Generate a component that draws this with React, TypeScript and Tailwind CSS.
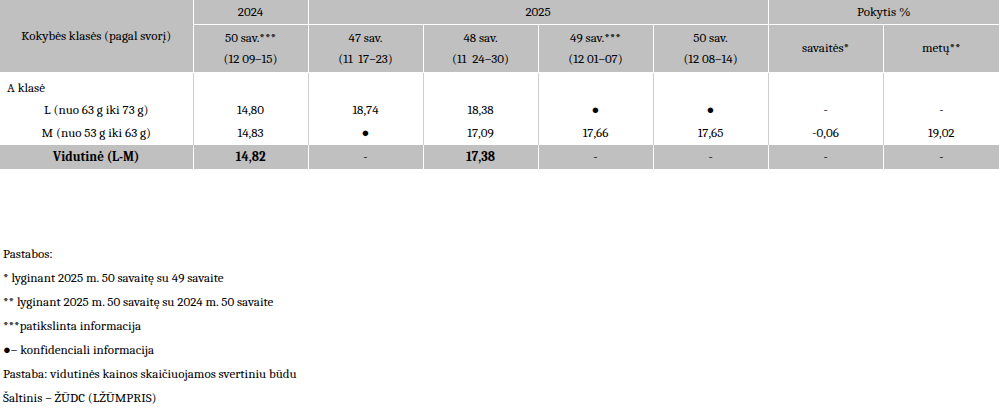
const headBase = 'bg-[#c0c0c0] border-l border-white text-center p-0';
const bodyCell = 'border-l border-[#cfcfcf] text-center p-0';

const weeks = [
  { top: '50 sav.***', bottom: '(12 09–15)' },
  { top: '47 sav.', bottom: '(11  17–23)' },
  { top: '48 sav.', bottom: '(11  24–30)' },
  { top: '49 sav.***', bottom: '(12 01–07)' },
  { top: '50 sav.', bottom: '(12 08–14)' },
];

const rows = [
  { label: 'L (nuo 63 g iki 73 g)', values: ['14,80', '18,74', '18,38', '●', '●', '-', '-'] },
  { label: 'M (nuo 53 g iki 63 g)', values: ['14,83', '●', '17,09', '17,66', '17,65', '-0,06', '19,02'] },
];

const average = ['14,82', '-', '17,38', '-', '-', '-', '-'];

const notes = [
  'Pastabos:',
  '* lyginant 2025 m. 50 savaitę su 49 savaite',
  '** lyginant 2025 m. 50 savaitę su 2024 m. 50 savaite',
  '***patikslinta informacija',
  '●– konfidenciali informacija',
  'Pastaba: vidutinės kainos skaičiuojamos svertiniu būdu',
  'Šaltinis – ŽŪDC (LŽŪMPRIS)',
];

export default function App() {
  return (
    <div className="w-[999px] h-[410px] bg-white text-black text-[13px] font-serif overflow-hidden">
      <table className="w-[999px] table-fixed border-collapse">
        <colgroup>
          <col className="w-[193px]" />
          <col className="w-[115px]" />
          <col className="w-[115px]" />
          <col className="w-[115px]" />
          <col className="w-[115px]" />
          <col className="w-[115px]" />
          <col className="w-[115px]" />
          <col className="w-[116px]" />
        </colgroup>
        <thead>
          <tr className="h-[24px]">
            <th rowSpan={2} className="bg-[#c0c0c0] text-center font-normal p-0 border-b border-white">
              Kokybės klasės (pagal svorį)
            </th>
            <th className={`${headBase} font-normal border-b`}>2024</th>
            <th colSpan={4} className={`${headBase} font-normal border-b`}>2025</th>
            <th colSpan={2} className={`${headBase} font-normal border-b`}>Pokytis %</th>
          </tr>
          <tr className="h-[48px]">
            {weeks.map((w) => (
              <th key={w.top + w.bottom} className={`${headBase} font-normal border-b leading-[21px] whitespace-pre`}>
                <div>{w.top}</div>
                <div>{w.bottom}</div>
              </th>
            ))}
            <th className={`${headBase} font-normal border-b`}>savaitės*</th>
            <th className={`${headBase} font-normal border-b`}>metų**</th>
          </tr>
        </thead>
        <tbody>
          <tr className="h-[26px]">
            <td className="text-left pl-[7px] pt-[4px]">A klasė</td>
            {Array.from({ length: 7 }).map((_, i) => (
              <td key={i} className={bodyCell}></td>
            ))}
          </tr>
          {rows.map((r) => (
            <tr key={r.label} className="h-[23px]">
              <td className="text-center p-0 pt-px">{r.label}</td>
              {r.values.map((v, i) => (
                <td key={i} className={`${bodyCell} pt-px`}>{v}</td>
              ))}
            </tr>
          ))}
          <tr className="h-[25px]">
            <td className="bg-[#c0c0c0] text-center font-bold p-0 border-t border-white">Vidutinė (L-M)</td>
            {average.map((v, i) => (
              <td
                key={i}
                className={`${headBase} border-t ${v === '-' ? 'font-normal' : 'font-bold'}`}
              >
                {v}
              </td>
            ))}
          </tr>
        </tbody>
      </table>
      <div className="mt-[73px] pl-[3px] leading-[24px]">
        {notes.map((n) => (
          <div key={n}>{n}</div>
        ))}
      </div>
    </div>
  );
}
